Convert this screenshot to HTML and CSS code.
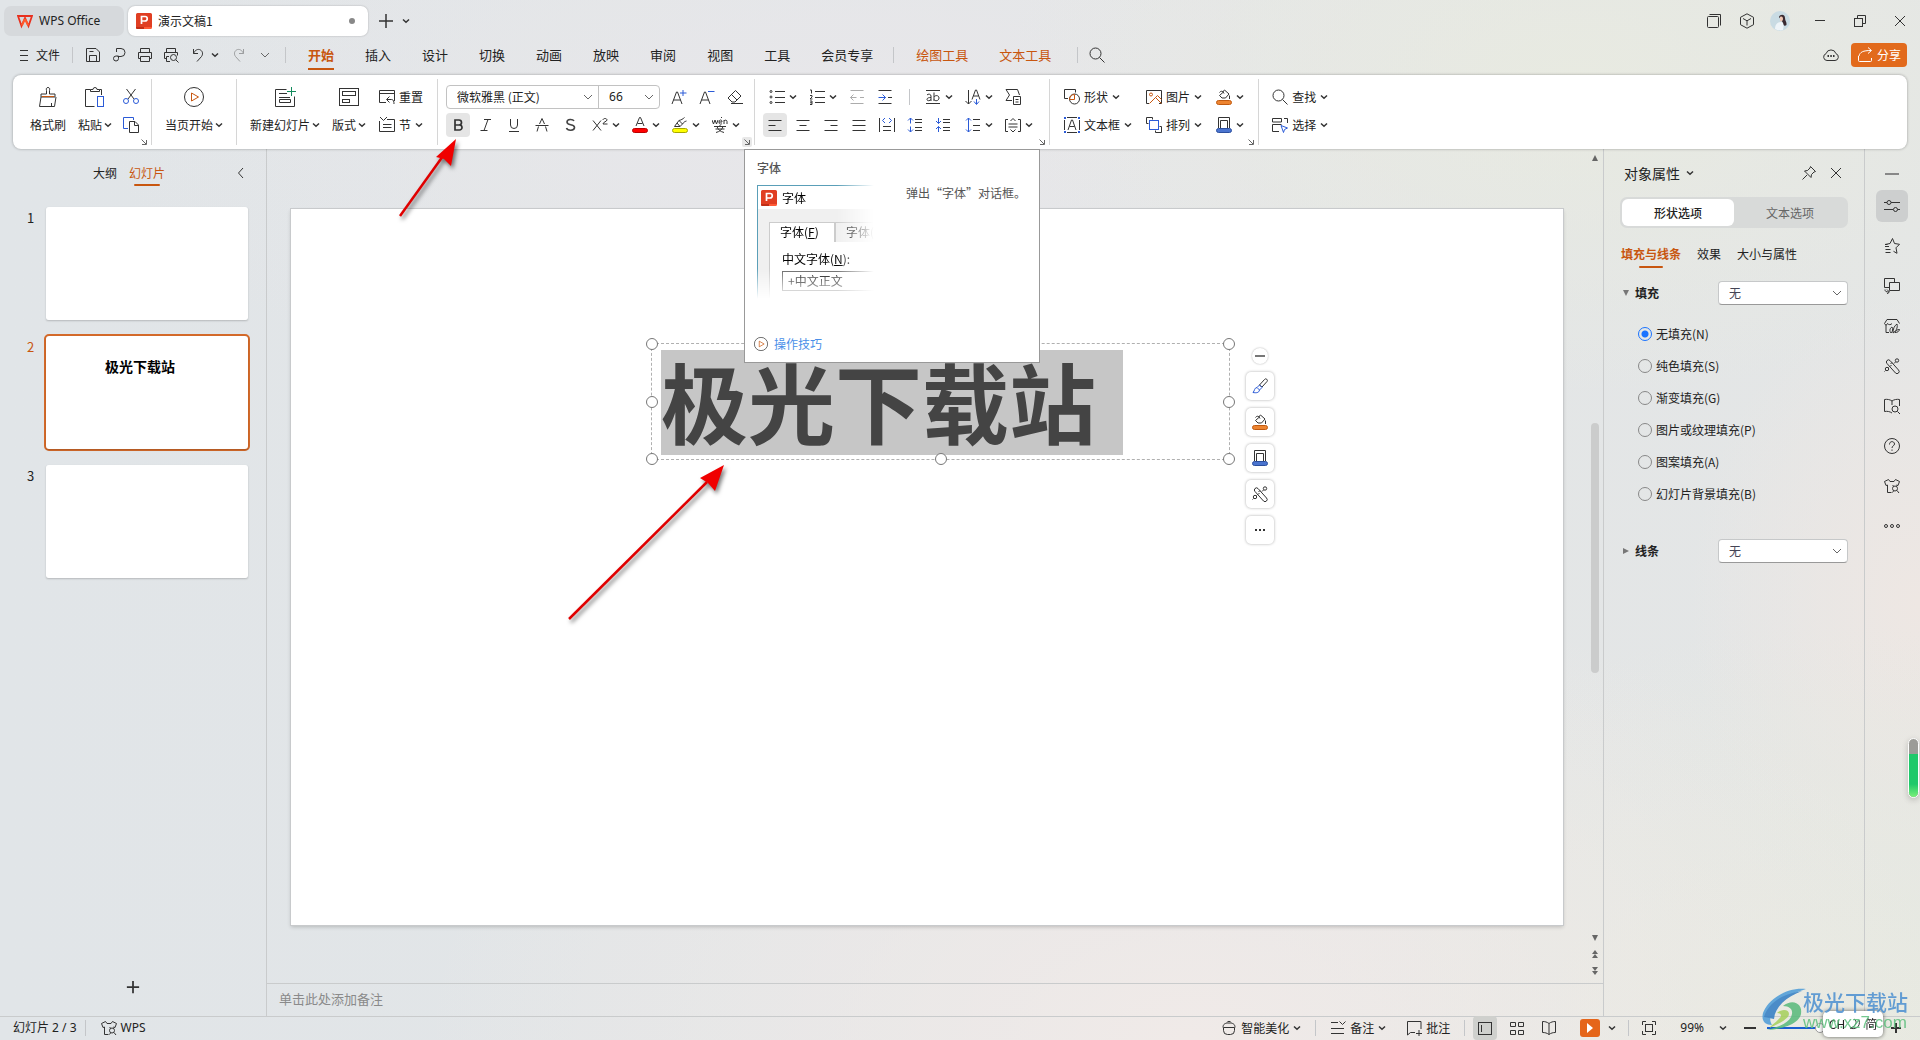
FILE: index.html
```html
<!DOCTYPE html>
<html lang="zh-CN">
<head>
<meta charset="utf-8">
<title>演示文稿1 - WPS Office</title>
<link rel="stylesheet" href="styles.css">
</head>
<body>
<svg class="defs" aria-hidden="true">
  <symbol id="chev" viewBox="0 0 8 8"><path d="M1 2.500 4 5.300 7 2.500" stroke-width="1.500"/></symbol>
  <symbol id="chevwide" viewBox="0 0 10 10"><path d="M1 3l4 4 4-4"/></symbol>
  <symbol id="launch" viewBox="0 0 8 8"><path d="M1.500 1.500 6 6M6.500 2v4.500H2" stroke="#666"/></symbol>
  <symbol id="plogo" viewBox="0 0 16 16"><path d="M1.500 0h13A1.500 1.500 0 0 1 16 1.500V14H8v2H1.500A1.500 1.500 0 0 1 0 14.500v-13A1.500 1.500 0 0 1 1.500 0z" fill="#e03e22" stroke="none"/><path d="M8 14h8v.500A1.500 1.500 0 0 1 14.500 16H8z" fill="#ff5a36" stroke="none"/><path d="M0 14h8v2H1.500A1.500 1.500 0 0 1 0 14.500z" fill="#c02e16" stroke="none"/><path d="M5.500 11V3.500H9a2.200 2.200 0 0 1 0 4.500H5.500" stroke="#fff" stroke-width="1.700"/></symbol>
  <symbol id="search" viewBox="0 0 16 16"><circle cx="6.500" cy="6.500" r="5.500"/><path d="M10.500 10.500 15.500 15.500"/></symbol>
  <symbol id="bucket" viewBox="0 0 16 16"><path d="M6.500 3 8.500 1l4.500 4-3.500 4H6L3.500 6.500 8 2.500M3.500 3.500C5 1.500 7 2 8 4.500M13.500 6.500v3.500"/><rect x=".5" y="11.500" width="15" height="4" rx="2" fill="#ed8430" stroke="#c05a10"/></symbol>
  <symbol id="outline" viewBox="0 0 16 16"><path d="M2.500 11V.500h11V11M4.500 11V3.500h7V11"/><rect x=".5" y="11.500" width="15" height="4" rx="2" fill="#4a74cf" stroke="#2b4f9e"/></symbol>
  <symbol id="tools" viewBox="0 0 16 16"><path d="M3 5.500a2 2 0 0 1 3-3l8.500 9.500a2 2 0 0 1-3 3zM6 8.500 7.500 7M8 4.500 6.500 6"/><circle cx="13" cy="2.500" r="1.700"/><circle cx="3" cy="11" r="1.700"/><path d="M11.500 4 10 5.500M4.500 9.500 5.500 8.500M1.500 12.500 .500 13.500"/></symbol>
  <symbol id="shirt" viewBox="0 0 16 16"><path d="M7.500 14.500h-4V7L2 7.500.500 3.500 4.500 1.500 6 3.500h4l1.500-2 4 2-1.500 4-1.500-.500"/><circle cx="11" cy="10.500" r="2.500"/><path d="M9.500 8 8.500 7M12.500 8l1-1M9.500 13l-1 1.500M13 12.500l2 2.500"/></symbol>
  <symbol id="playc" viewBox="0 0 20 20"><circle cx="10" cy="10" r="9.500"/><path d="M7.500 6v8l7-4z" stroke="#c8560f"/></symbol>
  <symbol id="book" viewBox="0 0 16 16"><path d="M8 3.500C6 2 4 1.500 1.500 1.500v11c2.500 0 4.500.500 6.500 2 2-1.500 4-2 6.500-2v-11C12 1.500 10 2 8 3.500z"/><path d="M8 3.500v11" /></symbol>
</svg>

<div class="app">
  <header class="titlebar">
    <button class="wintab home"><svg class="i" viewBox="0 0 16 16"><path d="M1 3h14l-3.500 10L8 5l-3.500 8z" stroke="#e8301e" stroke-width="1.800"/><path d="M8 6 4.800 12.500M8 6l3.200 6.500" stroke="#ff5a2c" stroke-width="2"/></svg><span class="latin">WPS Office</span></button>
    <button class="wintab doc"><svg class="i"><use href="#plogo"/></svg><span>演示文稿1</span><i class="dirty"></i></button>
    <button class="sl plus"><svg class="i" viewBox="0 0 16 16"><path d="M8 1v14M1 8h14" stroke-width="1.500"/></svg></button>
    <svg class="c"><use href="#chev"/></svg>
    <div class="wincontrols">
      <button class="sl"><svg class="i" viewBox="0 0 16 16"><rect x="1.500" y="3.500" width="11" height="11" rx="1"/><path d="M3.500 1.500h11v11"/></svg></button>
      <button class="sl"><svg class="i" viewBox="0 0 16 16"><path d="M8 .800 14.500 4.300v7.400L8 15.200 1.500 11.700V4.300zM4 5.500l4 2.300 4-2.300M8 8v4.500"/></svg></button>
      <button class="sl avatar"><svg viewBox="0 0 20 20" width="20" height="20" stroke-width="0"><g stroke="none"><circle cx="10" cy="10" r="10" fill="#c9dbe3"/><path d="M9 6c1-3 6-3 6 1 0 3 2 4 1.500 7-2 2-4 0-4-3z" fill="#3a2a30"/><path d="M10 6c2-1 3 0 3 2s-2 3-3 2z" fill="#efc6b4"/><path d="M5 18c0-5 3-7 6-7s3 4 2 8c-3 1-6 0-8-1z" fill="#eef4f8"/></g></svg></button>
      <button class="sl"><svg class="i" viewBox="0 0 16 16"><path d="M3 7.500h10"/></svg></button>
      <button class="sl"><svg class="i" viewBox="0 0 16 16"><rect x="2.500" y="5.500" width="8" height="8"/><path d="M5.500 5V2.500h8v8H11"/></svg></button>
      <button class="sl"><svg class="i" viewBox="0 0 16 16"><path d="M3 3l10 10M13 3 3 13"/></svg></button>
    </div>
  </header>

  <nav class="menubar">
    <button class="file"><svg class="i" viewBox="0 0 16 16"><path d="M4 3.500h8M4 8.500h8M4 13.500h8" stroke-width="1"/></svg>文件</button>
    <i class="vsep"></i>
    <div class="quick">
      <button class="sl"><svg class="i" viewBox="0 0 16 16"><path d="M1.500 1.500h9.500l3.500 3.500v9.500h-13zM4.500 14V8.500h7V14M4.500 4.500h4"/></svg></button>
      <button class="sl"><svg class="i" viewBox="0 0 16 16"><path d="M5.500 5V1.500H10a4 4 0 0 1 0 8H6.500M7.500 9.500v2a2.500 2.500 0 1 1-2.500-2.500h2.500"/></svg></button>
      <button class="sl"><svg class="i" viewBox="0 0 16 16"><path d="M3.500 5V1.500h9V5M3.500 11.500h-2v-6h13v6h-2M3.500 9.500h9v5h-9z"/></svg></button>
      <button class="sl"><svg class="i" viewBox="0 0 16 16"><path d="M3.500 5V1.500h9V5M3.500 11.500h-2v-6h13v3M3.500 9.500V14.500H7M3.500 9.500H6"/><circle cx="10.500" cy="10.500" r="3"/><path d="M13 13l2.500 2.500"/></svg></button>
      <button class="sl"><svg class="i" viewBox="0 0 16 16"><path d="M4.500 2v4.500H9M4.500 6.500C6 3 9 1.500 11.500 3s2.500 4.500 1 6.500L8 14.500"/></svg></button>
      <svg class="c"><use href="#chev"/></svg>
      <button class="sl off redo"><svg class="i" viewBox="0 0 16 16"><path d="M12.500 2v4.500H8M12.500 6.500C11 3 8 1.500 5.500 3S3 7.500 4.500 9.500L9 14.500"/></svg></button>
      <button class="sl"><svg class="w"><use href="#chevwide"/></svg></button>
    </div>
    <i class="vsep"></i>
    <div class="tabs">
      <a href="#" class="on">开始</a><a href="#">插入</a><a href="#">设计</a><a href="#">切换</a><a href="#">动画</a><a href="#">放映</a><a href="#">审阅</a><a href="#">视图</a><a href="#">工具</a><a href="#">会员专享</a>
    </div>
    <i class="vsep"></i>
    <div class="tabs ctx"><a href="#">绘图工具</a><a href="#">文本工具</a></div>
    <i class="vsep"></i>
    <button class="sl"><svg class="i"><use href="#search"/></svg></button>
    <div class="share-area">
      <button class="sl"><svg class="i" viewBox="0 0 16 16"><path d="M4 13.500a3.500 3.500 0 0 1-1-6.800A5.200 5.200 0 0 1 13 6.700a3.500 3.500 0 0 1-1 6.800z"/><path d="M4.500 9h1.500M7.300 9h1.500M10 9h1.500" stroke-width="2"/></svg></button>
      <button class="share"><svg class="i" viewBox="0 0 16 16"><path d="M1.500 9v4.500a1 1 0 0 0 1 1h11a1 1 0 0 0 1-1V11M2 9c1-4 4-5.500 12-5.500M11 .500l3.500 3L11 6.500"/></svg>分享</button>
    </div>
  </nav>

  <section class="ribbon">
    <div class="group g1">
      <button class="big"><svg viewBox="0 0 20 20"><path d="M8.500 7V3.500C8 1.500 8.500.500 10 .500s2 1 1.500 3V7h5.500v3H3V7h5.500M3 10 1.500 19.500h15l1.500-9.500M13.500 16v3.500"/><path d="M4 9.500h12" stroke="#c8560f"/></svg><span>格式刷</span></button>
      <button class="big"><svg viewBox="0 0 20 20"><path d="M5.500 2.500h-5v17h9M14.500 2.500h2V8M5.500 4.500v-2H8a2 2 0 0 1 4 0h2.500v2z"/><rect x="12.500" y="9.500" width="6" height="10" stroke="#2b5bd7"/></svg><span>粘贴<svg class="c"><use href="#chev"/></svg></span></button>
      <div class="col"><button class="sl"><svg class="i" viewBox="0 0 16 16"><path d="M3.500 0 11 10M12.500 0 5 10"/><g stroke="#2b5bd7"><circle cx="3" cy="12" r="2.500"/><circle cx="13" cy="12" r="2.500"/></g></svg></button><button class="sl"><svg class="i" viewBox="0 0 16 16"><path d="M5 11.500H.500V.500h10V3" stroke="#2b5bd7"/><path d="M6.500 4.500h5.500l3.500 3.500v7.500h-9zM11.500 5v3.500h4"/></svg></button></div>
      <button class="launch"><svg><use href="#launch"/></svg></button>
    </div>
    <div class="group g2">
      <button class="big"><svg><use href="#playc"/></svg><span>当页开始<svg class="c"><use href="#chev"/></svg></span></button>
    </div>
    <div class="group g2 g3">
      <button class="big"><svg viewBox="0 0 20 20"><path d="M11.500 2.500h-11v17h19V9.500M4 6.500h8M4 10.500h11M4.500 12.500h11v3h-11z"/><path d="M16.500 0v9M12 4.500h9" stroke="#128a5c"/></svg><span>新建幻灯片<svg class="c"><use href="#chev"/></svg></span></button>
      <button class="big"><svg viewBox="0 0 20 20"><rect x=".5" y="1.500" width="19" height="17"/><rect x="3.500" y="4.500" width="13" height="4"/><rect x="3.500" y="12.500" width="7" height="3"/></svg><span>版式<svg class="c"><use href="#chev"/></svg></span></button>
      <div class="col">
        <button class="tx"><svg class="i" viewBox="0 0 16 16"><path d="M7 13.500H.500v-12h15V12M.500 4.500h15M8 10.500h4.500c2 0 2.500 2 2.500 4.500M10.500 7.500 7.500 10.500l3 3"/></svg>重置</button>
        <button class="tx"><svg class="i" viewBox="0 0 16 16"><path d="M8 2.500h7.500v12H.500V4M1 0l3.500 3.500L8 0M4 7.500h8.500M4 10.500h8.500"/></svg>节<svg class="c"><use href="#chev"/></svg></button>
      </div>
    </div>
    <div class="group g4">
      <div class="col">
        <div class="row">
          <div class="combo">
            <label class="sel font"><select aria-label="字体"><option>微软雅黑 (正文)</option></select><svg class="w"><use href="#chevwide"/></svg></label>
            <label class="sel size"><select aria-label="字号"><option>66</option></select><svg class="w"><use href="#chevwide"/></svg></label>
          </div>
          <button class="sl"><svg class="i" viewBox="0 0 16 16"><path d="M1 15 5.500 3h1L11 15M2.500 11h7"/><path d="M12 1v6M9 4h6.500" stroke="#2b5bd7"/></svg></button>
          <button class="sl"><svg class="i" viewBox="0 0 16 16"><path d="M1 15 5.500 3h1L11 15M2.500 11h7"/><path d="M9 2.500h6.500" stroke="#2b5bd7"/></svg></button>
          <button class="sl"><svg class="i" viewBox="0 0 16 16"><path d="M1 9 8.500 1.500l5.500 5.500-6 6H5zM4.500 5.500l5.500 5.500M4 14.500h12"/></svg></button>
        </div>
        <div class="row">
          <button class="sl on"><svg class="i" viewBox="0 0 16 16"><path d="M5 3h4a2.400 2.400 0 0 1 0 5H5zM5 8h4.500a2.500 2.500 0 0 1 0 5H5z" stroke-width="1.700"/></svg></button>
          <button class="sl"><svg class="i" viewBox="0 0 16 16"><path d="M6 2.500h7M2.500 13.500h7M10 2.500 6 13.500"/></svg></button>
          <button class="sl"><svg class="i" viewBox="0 0 16 16"><path d="M4.500 2v6a3.500 3.500 0 0 0 7 0V2M3 14.500h10"/></svg></button>
          <button class="sl"><svg class="i" viewBox="0 0 16 16"><path d="M5.500 7 8 1.500 10.500 7M4.500 9.500 3 14.500M11.500 9.500l1.500 5M1.500 8.500h13"/></svg></button>
          <button class="sl"><svg class="i" viewBox="0 0 16 16"><path d="M12 4c-1-2-7-2.500-7 1 0 4 7.500 1.500 7.500 5.500 0 3.500-7 3.500-8 .500" stroke="#444" stroke-width="1.600"/></svg></button>
          <button class="dd push"><svg class="i" viewBox="0 0 16 16"><path d="M1 3.500l8 10M9 3.500l-8 10M11 3c0-2 4-2 4 0 0 1.500-4 2-4 4h4.500"/></svg><svg class="c"><use href="#chev"/></svg></button>
          <button class="dd"><svg class="i" viewBox="0 0 16 16"><path d="M4 9 7.500 .500h1L12 9M5.500 6.500h5"/><rect x=".5" y="11.500" width="15" height="4" rx="2" fill="#f00" stroke="#b00"/></svg><svg class="c"><use href="#chev"/></svg></button>
          <button class="dd"><svg class="i" viewBox="0 0 16 16"><path d="M2.500 9.500h5.500L5 6zM5 6 7 3.500l3.500 3.500-2.500 2.500M7 3.500C9 3 11 2 12.500.500M10.500 7c1-1.500 2-2.500 4-3"/><rect x=".5" y="11.500" width="15" height="4" rx="2" fill="#ff0" stroke="#a8a800"/></svg><svg class="c"><use href="#chev"/></svg></button>
          <button class="dd"><svg class="i" viewBox="0 0 16 16"><path d="M0 3l1.500 4L3 3l1.500 4L6 3M7 5h3c0-3-3-2.500-3 0s2 2.500 3 1.500M9 1l1-1M12 7V3M12 4c1-1.500 3-1 3 .500V7M2 9.500h12M8 8v1.500M3.500 12h9M4 15.500c4-1 6-3 7-6M12 15.500C8 14.500 6 12.500 5 9.500"/></svg><svg class="c"><use href="#chev"/></svg></button>
        </div>
      </div>
      <button class="launch on"><svg><use href="#launch"/></svg></button>
    </div>
    <div class="group g5">
      <div class="col">
        <div class="row inset">
          <button class="dd"><svg class="i" viewBox="0 0 16 16"><path d="M6 2.500h10M6 8.500h10M6 13.500h10"/><g><circle cx="2" cy="2.500" r="1"/><circle cx="2" cy="8" r="1"/><circle cx="2" cy="13.500" r="1"/></g></svg><svg class="c"><use href="#chev"/></svg></button>
          <button class="dd"><svg class="i" viewBox="0 0 16 16"><path d="M6 2.500h10M6 8.500h10M6 13.500h10M1 1h1.500v3.500M1 6.500h2v1.500l-2 2h2.500M1 12h2v3.500H1M1 13.800h2"/></svg><svg class="c"><use href="#chev"/></svg></button>
          <button class="sl off"><svg class="i" viewBox="0 0 16 16"><path d="M1.500 1.500h13M11 8.500h4M1.500 14.500h13M1.500 8.500h6M4.500 5.500 1.500 8.500l3 3"/></svg></button>
          <button class="sl"><svg class="i" viewBox="0 0 16 16"><path d="M1.500 1.500h13M11 8.500h4M1.500 14.500h13"/><path d="M1.500 8.500h7M5.500 5.500l3 3-3 3" stroke="#2b5bd7"/></svg></button>
          <i class="vsep"></i>
          <button class="dd"><svg class="i" viewBox="0 0 16 16"><path d="M1 1.500h14M1 14.500h14M2 6c1-1.500 4-1 4 1v5M6 8.500c-2 0-4 .300-4 2s3 1.500 4 0M9 3.500V12M9 8c1-2 5-2 5 1s-4 3.500-5 1.500"/></svg><svg class="c"><use href="#chev"/></svg></button>
          <button class="dd"><svg class="i" viewBox="0 0 16 16"><path d="M3.500 1v14M.500 12l3 3 3-3M7 10.500 10.500 1h1L15 10.500M8.500 7h5"/><path d="M11.500 10v5M9 12.500l2.500 3 2.500-3" stroke="#2b5bd7"/></svg><svg class="c"><use href="#chev"/></svg></button>
          <button class="sl"><svg class="i" viewBox="0 0 16 16"><path d="M7 11.500H1L4.500 6 1 .500h11.500L14.500 6M8.500 7.500h7v8h-7zM10.500 10.500h3M10.500 13h3"/></svg></button>
        </div>
        <div class="row">
          <button class="sl on"><svg class="i" viewBox="0 0 16 16"><path d="M1.500 3.500h13M1.500 8.500h7M1.500 13.500h13"/></svg></button>
          <button class="sl"><svg class="i" viewBox="0 0 16 16"><path d="M1.500 3.500h13M4.500 8.500h7M1.500 13.500h13"/></svg></button>
          <button class="sl"><svg class="i" viewBox="0 0 16 16"><path d="M1.500 3.500h13M7.500 8.500h7M1.500 13.500h13"/></svg></button>
          <button class="sl"><svg class="i" viewBox="0 0 16 16"><path d="M1.500 3.500h13M1.500 8.500h13M1.500 13.500h13"/></svg></button>
          <button class="sl"><svg class="i" viewBox="0 0 16 16"><path d="M.500 1v14M15.500 1v14M4 9.500h8M4 13.500h8"/><path d="M6 1 3.500 3.500 6 6M10 1l2.500 2.500L10 6" stroke="#2b5bd7"/></svg></button>
          <button class="sl"><svg class="i" viewBox="0 0 16 16"><path d="M8 2.500h7M8 5.500h7M8 10.500h7M8 13.500h7"/><path d="M3.500 6.500V1M1 3.500 3.500 1 6 3.500M3.500 9.500V15M1 12.500 3.500 15 6 12.500" stroke="#2b5bd7"/></svg></button>
          <button class="sl"><svg class="i" viewBox="0 0 16 16"><path d="M8 2.500h7M8 5.500h7M8 10.500h7M8 13.500h7"/><path d="M3.500 1v5.500M1 4 3.500 6.500 6 4M3.500 15V9.500M1 12 3.500 9.500 6 12" stroke="#2b5bd7"/></svg></button>
          <button class="dd push"><svg class="i" viewBox="0 0 16 16"><path d="M8 2.500h7M8 8.500h7M8 13.500h7"/><path d="M3.500 1v14M1 3.500 3.500 1 6 3.500M1 12.500 3.500 15 6 12.500" stroke="#2b5bd7"/></svg><svg class="c"><use href="#chev"/></svg></button>
          <button class="dd"><svg class="i" viewBox="0 0 16 16"><path d="M3 2.500H.500v12H3M13 2.500h2.500v12H13M3.500 7h9M3.500 10h9M5.500 4 8 1.500 10.500 4M5.500 12.500 8 15l2.500-2.500"/></svg><svg class="c"><use href="#chev"/></svg></button>
        </div>
      </div>
      <button class="launch"><svg><use href="#launch"/></svg></button>
    </div>
    <div class="group g6">
      <div class="col">
        <button class="tx"><svg class="i" viewBox="0 0 16 16"><path d="M4 9.500H.500v-9h11v3"/><circle cx="10.500" cy="10" r="5"/><path d="M5.500 10.500a5 5 0 0 1 5-5v5z" stroke="#c8560f"/></svg>形状<svg class="c"><use href="#chev"/></svg></button>
        <button class="tx"><svg class="i" viewBox="0 0 16 16"><path d="M.500 3v10M15.500 3v10M3 .500h10M3 15.500h10M4 13 7.500 3h1L12 13M5.500 9.500h5"/><path d="M0 0h2v2H0zM14 0h2v2h-2zM0 14h2v2H0zM14 14h2v2h-2z" fill="#2b5bd7" stroke="none"/></svg>文本框<svg class="c"><use href="#chev"/></svg></button>
      </div>
      <div class="col">
        <button class="tx"><svg class="i" viewBox="0 0 16 16"><path d="M13 14.500h2.500V1.500H.500v13H3"/><circle cx="5" cy="5.500" r="1.500" stroke="#c8560f"/><path d="M3.500 14.500l6-6 6 6M9.500 8.500l2-2 4 4" stroke="#c8560f"/></svg>图片<svg class="c"><use href="#chev"/></svg></button>
        <button class="tx"><svg class="i" viewBox="0 0 16 16"><path d="M2.500 6.500h-2v-6h6v2M13.500 9.500h2v6h-6v-2"/><rect x="3.500" y="3.500" width="9" height="9" stroke="#2b5bd7"/></svg>排列<svg class="c"><use href="#chev"/></svg></button>
      </div>
      <div class="col">
        <button class="dd"><svg class="i"><use href="#bucket"/></svg><svg class="c"><use href="#chev"/></svg></button>
        <button class="dd"><svg class="i"><use href="#outline"/></svg><svg class="c"><use href="#chev"/></svg></button>
      </div>
      <button class="launch"><svg><use href="#launch"/></svg></button>
    </div>
    <div class="group g7">
      <div class="col">
        <button class="tx"><svg class="i"><use href="#search"/></svg>查找<svg class="c"><use href="#chev"/></svg></button>
        <button class="tx"><svg class="i" viewBox="0 0 16 16"><path d="M.500 2V1.500h9V5H.500zM12 1.500h3.500V6M7 14.500H.500v-7h9"/><path d="M9 8.500l6.500 2.500-3 1.500-1 3z" stroke="#2b5bd7"/></svg>选择<svg class="c"><use href="#chev"/></svg></button>
      </div>
    </div>
  </section>

  <main class="work">
    <aside class="slides">
      <div class="slides-head">
        <a href="#">大纲</a><a href="#" class="on">幻灯片</a>
        <button class="fold"><svg class="i" viewBox="0 0 16 16"><path d="M10 3 5.500 8l4.500 5"/></svg></button>
      </div>
      <ol class="thumbs">
        <li><span class="num">1</span><div class="thumb"></div></li>
        <li class="on"><span class="num">2</span><div class="thumb"><b>极光下载站</b></div></li>
        <li><span class="num">3</span><div class="thumb"></div></li>
      </ol>
      <button class="add"><svg viewBox="0 0 16 16"><path d="M8 1v14M1 8h14" stroke-width="2"/></svg></button>
    </aside>

    <section class="editor">
      <div class="canvas">
        <div class="slide">
          <div class="textbox">
            <div class="marked">极光下载站</div>
            <i class="h tl"></i><i class="h tr"></i><i class="h ml"></i><i class="h mr"></i><i class="h bl"></i><i class="h bm"></i><i class="h br"></i>
          </div>
          <div class="floatbar">
            <button class="mini"><svg viewBox="0 0 10 10" width="10" height="10"><path d="M0 5h10" stroke="#777" stroke-width="2"/></svg></button>
            <button><svg class="i" viewBox="0 0 16 16"><path d="M7.500 7 12.500 1.500a1.500 1.500 0 0 1 2.500 2L10 9z"/><path d="M7.500 7 10 9.500 7.500 12 5 9.500zM5 9.500c-3 .500-2 3-4 5 3 .500 6 .500 6.500-2.500" stroke="#2b5bd7"/></svg></button>
            <button><svg class="i"><use href="#bucket"/></svg></button>
            <button><svg class="i"><use href="#outline"/></svg></button>
            <button><svg class="i"><use href="#tools"/></svg></button>
            <button><svg class="i" viewBox="0 0 16 16"><path d="M3 8h2M7 8h2M11 8h2" stroke-width="2"/></svg></button>
          </div>
        </div>
        <div class="scroll">
          <svg viewBox="0 0 6 6"><path d="M3 0 6 6H0z"/></svg>
          <div class="track"><i></i></div>
          <svg viewBox="0 0 6 6"><path d="M3 6 6 0H0z"/></svg>
          <svg class="dbl" viewBox="0 0 6 8"><path d="M3 0l3 4H0zM3 4l3 4H0z"/></svg>
          <svg class="dbl" viewBox="0 0 6 8"><path d="M3 4l3-4H0zM3 8l3-4H0z"/></svg>
        </div>
      </div>
      <div class="notes">单击此处添加备注</div>
    </section>

    <aside class="props">
      <div class="props-head"><h2>对象属性</h2><svg class="c"><use href="#chev"/></svg>
        <button class="sl"><svg class="i" viewBox="0 0 16 16"><path d="M9.500 1.500l5 5-1.500.500-2.500 2.500-.500 3-6.500-6.500 3-.500L9 3zM6 10l-4.500 4.500"/></svg></button>
        <button class="sl"><svg class="i" viewBox="0 0 16 16"><path d="M3 3l10 10M13 3 3 13"/></svg></button>
      </div>
      <div class="seg"><button class="on">形状选项</button><button>文本选项</button></div>
      <div class="subtabs"><a href="#" class="on">填充与线条</a><a href="#">效果</a><a href="#">大小与属性</a></div>
      <div class="prop"><svg class="tri" viewBox="0 0 8 8"><path d="M1 1h6L4 7z"/></svg><label for="fill">填充</label>
        <span class="sel boxed"><select id="fill"><option>无</option></select><svg class="w"><use href="#chevwide"/></svg></span></div>
      <div class="radios">
        <label><input type="radio" name="f" checked>无填充(N)</label>
        <label><input type="radio" name="f">纯色填充(S)</label>
        <label><input type="radio" name="f">渐变填充(G)</label>
        <label><input type="radio" name="f">图片或纹理填充(P)</label>
        <label><input type="radio" name="f">图案填充(A)</label>
        <label><input type="radio" name="f">幻灯片背景填充(B)</label>
      </div>
      <div class="prop"><svg class="tri" viewBox="0 0 8 8"><path d="M1 1v6l6-3z"/></svg><label for="line">线条</label>
        <span class="sel boxed"><select id="line"><option>无</option></select><svg class="w"><use href="#chevwide"/></svg></span></div>
    </aside>

    <aside class="side">
      <button class="dash"><svg class="i" viewBox="0 0 16 16"><path d="M1 8h14" stroke="#888" stroke-width="2"/></svg></button>
      <button class="on"><svg class="i" viewBox="0 0 16 16"><path d="M0 4.500h3M7 4.500h9M0 11.500h9M13.500 11.500H16"/><circle cx="5" cy="4.500" r="2"/><circle cx="11.500" cy="11.500" r="2"/></svg></button>
      <button><svg class="i" viewBox="0 0 16 16"><path d="M3.500 6.500H1L6 5.500 8.500.500l2 5 5 .800-3.500 3.500 1 5.500-3.500-2M1 8.500h4M1.500 11.500h5M1.500 14.500h5"/></svg></button>
      <button><svg class="i" viewBox="0 0 16 16"><path d="M6 9.500H.500v-9h10V4M5.500 4.500h10v8h-10zM1 11.500c0 2 1 2.500 4 2.500M3 11.500l2.500 2.500L3 16"/></svg></button>
      <button><svg class="i" viewBox="0 0 16 16"><path d="M5 14.500H2V6.500M3.500 5.500c0 2-3 1.500-3 0L3 1.500h10l2.500 4M3.500 5.500C4.500 7 7 7 8 5.500M7 15c-2-2-1-5 1-6 1 2 1 4-1 6zM9 15c0-4 1-7 4-9 1 4-1 7-4 9zM11 14.500c1-2 2-3 4.500-3-.500 2-2 3-4.500 3z"/></svg></button>
      <button><svg class="i"><use href="#tools"/></svg></button>
      <button><svg class="i" viewBox="0 0 16 16"><path d="M8 15C6 13.500 3 13 .500 13.500v-12C3 1 6 1.500 8 3c2-1.500 5-2 7.500-1.500V8M8 3v4"/><circle cx="11" cy="11" r="3"/><path d="M13.500 13.500 16 16"/></svg></button>
      <button><svg class="i" viewBox="0 0 16 16"><circle cx="8" cy="8" r="7.500"/><path d="M5.500 6.500c0-4 5-3.500 5-.500 0 2-2.500 1.500-2.500 4M8 11.500v1.300"/></svg></button>
      <button><svg class="i"><use href="#shirt"/></svg></button>
      <button><svg class="i" viewBox="0 0 16 16"><circle cx="2" cy="8" r="1.500"/><circle cx="8" cy="8" r="1.500"/><circle cx="14" cy="8" r="1.500"/></svg></button>
    </aside>
  </main>

  <footer class="status">
    <span class="latin">幻灯片 2 / 3</span><i class="vsep"></i>
    <button class="tx"><svg class="i"><use href="#shirt"/></svg><span class="latin">WPS</span></button>
    <div class="status-right">
      <button class="tx"><svg class="i" viewBox="0 0 16 16"><path d="M2.500 7.500v3a4 4 0 0 0 4 4h3a4 4 0 0 0 4-4v-3zM2 7.500C2 4 4 3 8 3s6 1 6 4.500M6 2.500C6 1 10 1 10 2.500"/></svg>智能美化<svg class="c"><use href="#chev"/></svg></button>
      <i class="vsep"></i>
      <button class="tx"><svg class="i" viewBox="0 0 16 16"><path d="M1 2.500h7M1 8.500h13M1 13.500h13M9.500 1.500l3 3 3-3"/></svg>备注<svg class="c"><use href="#chev"/></svg></button>
      <button class="tx comment"><svg class="i" viewBox="0 0 16 16"><path d="M15 9V1.500H1.500V15L4.500 12.500H9M13 10v6M10 13.500h6"/></svg>批注</button>
      <i class="vsep"></i>
      <div class="views">
        <button class="sl on"><svg class="i" viewBox="0 0 16 16"><rect x="1.500" y="2.500" width="13" height="12"/><path d="M4.500 5v7"/></svg></button>
        <button class="sl"><svg class="i" viewBox="0 0 16 16"><path d="M1.500 2.500h5v4h-5zM9.500 2.500h5v4h-5zM1.500 10.500h5v4h-5zM9.500 10.500h5v4h-5z"/></svg></button>
        <button class="sl"><svg class="i"><use href="#book"/></svg></button>
      </div>
      <button class="play"><svg viewBox="0 0 8 10" width="8" height="10"><path d="M1 0v10l6-5z" fill="#fff" stroke="none"/></svg></button><svg class="c"><use href="#chev"/></svg>
      <i class="vsep"></i>
      <button class="sl"><svg class="i" viewBox="0 0 16 16"><path d="M1.500 5V1.500H5M11 1.500h3.500V5M14.500 11v3.500H11M5 14.500H1.500V11"/><rect x="4.500" y="4.500" width="7" height="7"/></svg></button>
      <button class="zoom latin">99%</button><svg class="c"><use href="#chev"/></svg>
      <button class="sl minus"><svg class="i" viewBox="0 0 16 16"><path d="M2 8h12" stroke-width="2"/></svg></button>
      <input type="range" class="slider" aria-label="缩放" value="46">
      <button class="sl"><svg class="i" viewBox="0 0 16 16"><path d="M8 3v10M3 8h10" stroke-width="2"/></svg></button>
    </div>
  </footer>
</div>

<div class="tip">
  <h3>字体</h3>
  <div class="tip-body">
    <div class="dlg">
      <div class="dlg-title"><svg class="i"><use href="#plogo"/></svg>字体</div>
      <div class="dlg-body">
        <div class="dlg-tabs"><span class="on">字体(<u>F</u>)</span><span>字体(</span></div>
        <div class="dlg-page"><div>中文字体(<u>N</u>):</div><div class="field">+中文正文</div></div>
      </div>
    </div>
    <p>弹出“字体”对话框。</p>
  </div>
  <a href="#"><svg class="i"><use href="#playc"/></svg>操作技巧</a>
</div>

<svg class="arrow a1" viewBox="0 0 80 100"><path d="M10 86 53 26"/><path class="head" d="M66 9 61 36 54 29 46 27z"/></svg>
<svg class="arrow a2" viewBox="0 0 180 180"><path d="M9 159 147 22"/><path class="head" d="M164 5 155 31 148 23 140 18z"/></svg>

<div class="meter"><i></i></div>
<div class="ime"><span>CH</span><svg viewBox="0 0 12 12" width="12" height="12"><path d="M5 1c4 2 2 8-4 9 5 2 11-1 9-8"/></svg><span>简</span></div>
<div class="mark">
  <svg viewBox="0 0 46 44"><path d="M45 1C27-1 8 10 2 25c-2 8 2 12 9 12-3-5-2-9 2-15C19 12 31 5 45 1z" fill="#4a9bd8"/><path d="M3 29C7 16 20 6 41 3 25 9 14 19 13 31z" fill="#2f7cc4"/><path d="M22 18c10-8 20-2 18 8-2 9-16 15-34 16 12-3 24-8 25-16 1-5-3-8-9-8z" fill="#56b97a"/><path d="M16 25c6-5 12-3 12 1s-8 9-20 14c4-4 11-9 12-12 0-2-1-3-4-3z" fill="#a5cf5a"/></svg>
  <div><b>极光下载站</b><span>www.xz7.com</span></div>
</div>
</body>
</html>
```
FILE: styles.css
```css
* { box-sizing: border-box; }
html, body { margin: 0; height: 100%; }
body {
  font: 12px/16px "Noto Sans CJK SC", sans-serif;
  color: #222;
  overflow: hidden;
  background:
    radial-gradient(ellipse 40% 45% at 62% 100%, #f0eae8, transparent),
    radial-gradient(ellipse 30% 30% at 82% 8%, #e8eae1, transparent),
    radial-gradient(ellipse 30% 40% at 95% 100%, #e8eae0, transparent),
    radial-gradient(ellipse 12% 30% at 100% 58%, #eee7e3, transparent),
    radial-gradient(ellipse 40% 30% at 45% 12%, #e8e7ea, transparent),
    linear-gradient(90deg, #e1e5e8, #e4e6e6);
}
button { font: inherit; color: inherit; background: none; border: 0; padding: 0; margin: 0; }
a { color: inherit; text-decoration: none; }
select { font: inherit; appearance: none; border: 0; background: none; color: inherit; width: 100%; }
svg { fill: none; stroke: #333; flex: none; display: block; }
.defs { position: absolute; width: 0; height: 0; }
.i { width: 16px; height: 16px; }
.c { width: 8px; height: 8px; }
.w { width: 10px; height: 10px; stroke: #666; }
.latin { font-family: "Noto Sans", "Noto Sans CJK SC", sans-serif; }
.sl { width: 24px; height: 24px; display: flex; align-items: center; justify-content: center; border-radius: 4px; flex: none; }
.sl.on { background: #e5e5e5; }
.off { opacity: .4; }
.vsep { width: 1px; height: 16px; background: #c4c6c9; flex: none; }

.app { height: 100vh; display: flex; flex-direction: column; }

/* title bar */
.titlebar { display: flex; align-items: center; height: 40px; padding: 2px 8px 0 4px; gap: 4px; flex: none; }
.wintab { display: flex; align-items: center; height: 30px; border-radius: 7px; gap: 6px; }
.home { width: 120px; background: #d6d9dc; padding-left: 13px; }
.doc { width: 240px; background: #fff; padding: 0 13px 0 8px; box-shadow: 0 0 2px #0004; }
.dirty { width: 6px; height: 6px; border-radius: 50%; background: #888; margin-left: auto; }
.plus { margin: 0 0 0 2px; }
.wincontrols { margin-left: auto; display: flex; gap: 16px; }
.wincontrols .sl:nth-child(-n+2) { margin-right: -7px; }

/* menu bar */
.menubar { display: flex; align-items: center; height: 30px; padding: 0 13px 0 16px; flex: none; margin-bottom: 5px; }
.file { display: flex; align-items: center; gap: 4px; margin-right: 12px; }
.quick { display: flex; align-items: center; gap: 2px; margin: 0 8px; }
.redo { margin-left: 6px; }
.tabs { display: flex; gap: 31px; padding: 0 20px 0 22px; font-size: 13px; }
.tabs a { height: 30px; line-height: 30px; box-shadow: none; }
.tabs .on { color: #c8560f; font-weight: 700; box-shadow: inset 0 -2px #c8560f; }
.ctx { color: #c8560f; padding-right: 26px; }
.menubar > .sl { margin-left: 7px; }
.share-area { margin-left: auto; display: flex; gap: 8px; }
.share { width: 56px; height: 24px; border-radius: 4px; background: #e26a1c; color: #fff; display: flex; align-items: center; justify-content: center; gap: 4px; }
.share svg { stroke: #fff; }

/* ribbon */
.ribbon { display: flex; margin: 0 13px; height: 74px; padding: 4px 0; background: #fff; border-radius: 8px; box-shadow: 0 0 3px #0005; flex: none; position: relative; }
.group { position: relative; display: flex; align-items: flex-start; padding: 6px 0 0; border-right: 1px solid #d6d6d6; }
.g1 { padding-left: 17px; padding-right: 8px; gap: 12px; }
.g1 .col { margin-left: -5px; }
.g2 { padding-left: 13px; padding-right: 13px; gap: 12px; }
.g3 { padding-right: 14px; }
.g3 .col { margin-left: -3px; }
.g4 { padding-left: 8px; padding-right: 7px; }
.g5 { padding-left: 8px; padding-right: 12px; }
.g6 { padding-left: 10px; padding-right: 10px; gap: 10px; }
.g7 { padding-left: 9px; border: 0; }
.big { display: flex; flex-direction: column; align-items: center; gap: 4px; }
.big > svg { width: 20px; height: 20px; margin: 2px 0; overflow: visible; }
.big > span { display: flex; align-items: center; gap: 2px; height: 24px; }
.col { display: flex; flex-direction: column; gap: 4px; }
.row { display: flex; align-items: center; gap: 4px; }
.inset { padding-left: 2px; }
.row .vsep { margin: 0 7px 0 8px; }
.dd { display: flex; align-items: center; height: 24px; padding: 0 4px; }
.dd .c { margin-left: 4px; }
.push { margin-left: 2px; }
.tx { display: flex; align-items: center; height: 24px; padding-left: 4px; white-space: nowrap; }
.tx .i { margin-right: 4px; }
.tx .c { margin-left: 4px; }
.launch { position: absolute; right: 2px; bottom: -2px; width: 10px; height: 10px; padding: 1px; }
.launch svg { width: 8px; height: 8px; }
.launch.on { background: #e8e8e8; border-radius: 2px; }
.combo { display: flex; width: 214px; height: 24px; border: 1px solid #c2c2c2; border-radius: 4px; margin-right: 3px; }
.sel { display: grid; grid-template-columns: 1fr 20px; align-items: center; }
.sel select { grid-area: 1 / 1 / 2 / 3; padding: 0 10px; height: 22px; }
.sel svg { grid-area: 1 / 2; justify-self: center; pointer-events: none; }
.font { width: 152px; border-right: 1px solid #c2c2c2; }
.size { flex: 1; }
.size select { font-family: "Noto Sans", sans-serif; }

/* work area */
.work { flex: 1; display: flex; min-height: 0; border-bottom: 1px solid #c9cbcc; }
.slides { width: 267px; border-right: 1px solid #c9cbcc; display: flex; flex-direction: column; align-items: stretch; flex: none; }
.slides-head { display: flex; gap: 12px; padding: 12px 17px 0 93px; }
.slides-head a { line-height: 24px; height: 24px; }
.slides-head .on { color: #c8560f; position: relative; }
.slides-head .on::after, .subtabs .on::after { content: ""; display: block; height: 2px; background: #c8560f; margin: -1px 5px 0; border-radius: 1px; }
.fold { margin-left: auto; }
.thumbs { list-style: none; margin: 20px 0 0; padding: 0 16px 0 27px; display: flex; flex-direction: column; gap: 12px; }
.thumbs li { display: flex; }
.num { width: 17px; padding-top: 5px; font-size: 13px; }
.thumb { flex: 1; height: 117px; border: 2px solid transparent; border-radius: 5px; background: #fff padding-box; position: relative; text-align: center; }
.thumb::before { content: ""; position: absolute; inset: 0; border-radius: 2px; box-shadow: 0 1px 2px #0003; }
.thumbs .on .thumb { border-color: #d46a2a; }
.thumbs .on .num { color: #c8560f; }
.thumb b { display: block; font-size: 14px; line-height: 20px; padding: 20px 14px 0 0; color: #000; }
.add { margin: auto auto 22px; }
.add svg { width: 14px; height: 14px; }

.editor { flex: 1; display: flex; flex-direction: column; min-width: 0; }
.canvas { flex: 1; display: flex; min-height: 0; }
.slide { flex: 1; align-self: flex-start; aspect-ratio: 16 / 9; margin: 60px 24px 0; background: #fff; box-shadow: 0 0 0 1px #c8cacc, 0 2px 4px #0003; position: relative; }
.textbox { position: absolute; left: 360px; top: 134px; width: 579px; height: 117px; border: 1px dashed #b0b0b0; padding: 6px 9px; }
.marked { width: 462px; height: 105px; background: #c6c6c6; color: #444; font-size: 87px; font-weight: 700; line-height: 100px; white-space: nowrap; }
.h { position: absolute; width: 12px; height: 12px; border: 1px solid #777; border-radius: 50%; background: #fff; margin: -6px; }
.tl { left: 0; top: 0; } .tr { left: 100%; top: 0; } .ml { left: 0; top: 50%; } .mr { left: 100%; top: 50%; }
.bl { left: 0; top: 100%; } .bm { left: 50%; top: 100%; } .br { left: 100%; top: 100%; }
.floatbar { position: absolute; left: 955px; top: 139px; display: flex; flex-direction: column; align-items: center; gap: 8px; }
.floatbar button { width: 28px; height: 28px; background: #fff; border-radius: 5px; box-shadow: 0 0 3px #0005; display: flex; align-items: center; justify-content: center; }
.floatbar .mini { width: 16px; height: 16px; border-radius: 50%; box-shadow: 0 0 2px #0005; }
.scroll { width: 16px; display: flex; flex-direction: column; align-items: center; padding: 6px 0 8px; gap: 9px; }
.scroll svg { width: 6px; height: 6px; fill: #666; stroke: none; }
.scroll .dbl { height: 8px; }
.track { flex: 1; width: 8px; display: flex; flex-direction: column; }
.track i { display: block; height: 33%; margin-top: auto; margin-bottom: auto; border-radius: 4px; background: #cbcccc; }
.notes { height: 33px; border-top: 1px solid #c9cbcc; padding-left: 12px; font-size: 13px; line-height: 29px; color: #8a8a8a; flex: none; }

/* object properties */
.props { width: 261px; border-left: 1px solid #c9cbcc; padding: 12px 16px 0; flex: none; }
.props-head { display: flex; align-items: center; padding-left: 4px; }
.props-head h2 { margin: 0 6px 0 0; font-size: 14px; font-weight: 400; line-height: 24px; }
.props-head .c { margin-right: auto; }
.props-head .sl { margin-left: 3px; }
.seg { display: flex; margin-top: 12px; height: 31px; padding: 2px; background: #d8dad9; border-radius: 7px; color: #666; }
.seg button { flex: 1; border-radius: 6px; }
.seg .on { background: #fff; color: #222; font-weight: 500; }
.subtabs { display: flex; gap: 16px; margin-top: 14px; padding-left: 1px; height: 26px; line-height: 24px; }
.subtabs .on { color: #c8560f; font-weight: 700; }
.subtabs .on::after { margin: 0 18px; }
.prop { display: flex; align-items: center; margin-top: 13px; padding-left: 2px; }
.tri { width: 8px; height: 8px; fill: #777; stroke: none; margin-right: 5px; }
.prop label { font-weight: 700; }
.boxed { margin-left: auto; width: 130px; height: 24px; background: #fff; border: 1px solid #c6c8c9; border-bottom-color: #999; border-radius: 4px; color: #445; }
.radios { display: flex; flex-direction: column; gap: 16px; padding: 21px 18px 24px; }
.radios label { display: flex; align-items: center; gap: 4px; height: 16px; }
.radios input { appearance: none; width: 14px; height: 14px; margin: 0; border: 1px solid #888; border-radius: 50%; }
.radios input:checked { border-color: #1a73ff; background: radial-gradient(circle, #1a73ff 3px, transparent 4px); }

.side { width: 56px; border-left: 1px solid #c9cbcc; display: flex; flex-direction: column; align-items: center; gap: 8px; padding: 9px 1px 0 0; flex: none; }
.side button { width: 32px; height: 32px; border-radius: 6px; display: flex; align-items: center; justify-content: center; }
.side .dash { height: 24px; margin-top: 4px; margin-bottom: -4px; }
.side .on { background: #cdcfcf; }

/* status bar */
.status { display: flex; align-items: center; height: 23px; padding: 0 12px 1px 13px; flex: none; white-space: nowrap; }
.status > .vsep { margin: 0 11px 0 8px; }
.status-right { margin-left: auto; display: flex; align-items: center; }
.status-right .vsep { margin: 0 10px 0 14px; }
.comment { margin-left: 16px; }
.views { display: flex; gap: 8px; }
.views .on { background: #cfd0cd; }
.status-right .vsep:has(+ .views) { margin-right: 8px; }
.play { width: 20px; height: 18px; border-radius: 3px; background: #e5651a; margin: 0 8px 0 19px; display: flex; align-items: center; justify-content: center; }
.play + .c + .vsep { margin: 0 8px 0 12px; }
.zoom { margin: 0 15px 0 19px; }
.minus { margin: 0 2px 0 11px; }
.slider { appearance: none; width: 114px; height: 12px; margin: 0 3px; background: linear-gradient(#1a5fd0, #1a5fd0) left center / 50% 2px no-repeat, linear-gradient(#aaa, #aaa) center / 100% 2px no-repeat; }
.slider::-webkit-slider-thumb { appearance: none; width: 10px; height: 10px; border-radius: 50%; background: #fff; border: 1px solid #999; }

/* tooltip of the font dialog launcher */
.tip { position: absolute; left: 744px; top: 149px; width: 296px; height: 214px; background: #fff; border: 1px solid #999; padding: 10px 12px; color: #555; display: flex; flex-direction: column; }
.tip h3 { margin: 0; font-size: 12px; font-weight: 500; line-height: 16px; }
.tip-body { display: flex; margin-top: 9px; flex: 1; }
.tip-body p { margin: 0 0 0 26px; white-space: nowrap; }
.dlg { width: 123px; height: 116px; border: 1px solid #5a9fb8; border-right: 0; border-bottom: 0; color: #000; overflow: hidden; white-space: nowrap; mask-image: linear-gradient(90deg, #000 65%, transparent 95%), linear-gradient(#000 72%, transparent 98%); mask-composite: intersect; }
.dlg-title { display: flex; align-items: center; gap: 5px; height: 23px; padding-left: 3px; }
.dlg-body { background: #f0f0f0; padding: 13px 0 0 11px; }
.dlg-tabs { display: flex; }
.dlg-tabs span { height: 20px; width: 66px; flex: none; line-height: 18px; padding-left: 10px; border: 1px solid #ccc; border-bottom: 0; }
.dlg-tabs .on { background: #fff; }
.dlg-page { background: #fff; padding: 9px 0 20px 12px; border-left: 1px solid #ccc; }
.dlg-page .field { border: 1px solid #666; margin-top: 4px; padding-left: 5px; line-height: 18px; }
.tip > a { color: #4a8fe8; display: flex; gap: 6px; align-items: center; margin-left: -3px; }
.tip > a .i { width: 14px; height: 14px; }

/* annotation arrows */
.arrow { position: absolute; stroke: #e00000; stroke-width: 2.500; filter: drop-shadow(2px 3px 2px #0008); pointer-events: none; }
.arrow .head { fill: #f00000; stroke: none; }
.a1 { left: 390px; top: 130px; width: 80px; height: 100px; }
.a2 { left: 560px; top: 460px; width: 180px; height: 180px; }

.meter { position: fixed; right: 1px; top: 738px; width: 11px; height: 60px; border: 1px solid #fff; border-radius: 6px; background: #9c9c98; overflow: hidden; box-shadow: 0 2px 6px #0003; padding-top: 15px; }
.meter i { display: block; height: 100%; background: linear-gradient(#1fc96a 70%, #7bf07a); }
.ime { position: fixed; right: 37px; bottom: 3px; width: 60px; height: 26px; border-radius: 5px; background: #fff; box-shadow: 0 0 4px #0009; display: flex; align-items: center; justify-content: center; gap: 4px; }
.mark { position: fixed; right: 12px; bottom: 8px; display: flex; opacity: .85; pointer-events: none; }
.mark svg { width: 46px; height: 44px; stroke: none; margin-right: -4px; }
.mark div { display: flex; flex-direction: column; }
.mark b { font-size: 21px; line-height: 26px; color: #4a8fd0; font-weight: 500; }
.mark span { font: 17px/18px "Liberation Sans", sans-serif; color: #5cbf7c; }
```
